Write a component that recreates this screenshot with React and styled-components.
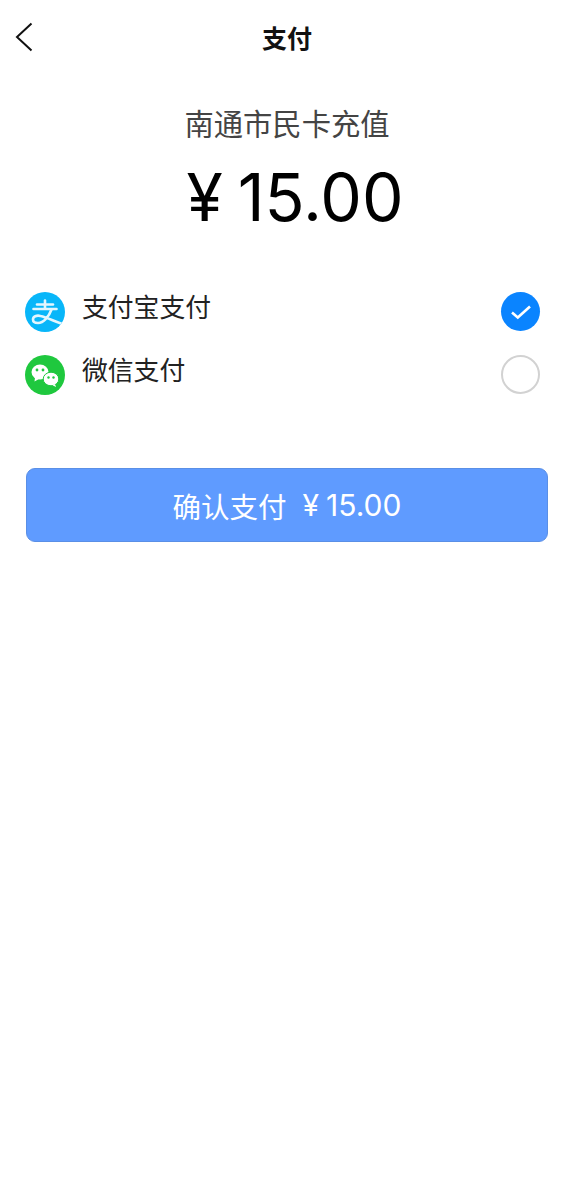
import React, { useState } from 'react'
import styled, { createGlobalStyle } from 'styled-components'

const GlobalStyle = createGlobalStyle`
  html, body {
    margin: 0;
    padding: 0;
    background: #fff;
    font-family: "Inter", "Noto Sans CJK SC", sans-serif;
  }
`
const Page = styled.div`
  width: 577px;
  height: 1195px;
  background: #fff;
  overflow: hidden;
`
const Header = styled.div`
  height: 78px;
  display: flex;
  align-items: center;
  position: relative;
`
const Back = styled.button`
  position: absolute;
  left: 15px;
  top: 22px;
  width: 18px;
  height: 30px;
  padding: 0;
  border: none;
  background: transparent;
  color: #111;
`
const Title = styled.div`
  width: 100%;
  padding-right: 3px;
  text-align: center;
  font-size: 25px;
  line-height: 78px;
  font-weight: 700;
  color: #111;
`
const Merchant = styled.div`
  margin-top: 25px;
  padding-right: 3px;
  text-align: center;
  font-size: 29.3px;
  line-height: 44px;
  color: #444;
`
const Amount = styled.div`
  margin-top: 13px;
  padding-left: 13px;
  display: flex;
  justify-content: center;
  align-items: center;
  gap: 15px;
  height: 74px;
  font-size: 66px;
  line-height: 74px;
  color: #000;
`
const Methods = styled.div`
  margin-top: 58px;
  padding: 0 37px 0 25px;
  display: flex;
  flex-direction: column;
  gap: 23px;
`
const Method = styled.div`
  display: flex;
  align-items: center;
  height: 40px;
  cursor: pointer;
`
const Label = styled.div`
  margin-left: 17px;
  flex: 1;
  font-size: 25.8px;
  line-height: 34px;
  color: #222;
  transform: translateY(-4px);
`
const Radio = styled.div`
  align-self: flex-start;
  width: 39px;
  height: 39px;
  box-sizing: border-box;
  border-radius: 50%;
  display: flex;
  align-items: center;
  justify-content: center;
  background: ${({ $on }) => ($on ? '#0a84ff' : '#fff')};
  border: ${({ $on }) => ($on ? 'none' : '2px solid #d2d2d2')};
`
const PayButton = styled.button`
  display: flex;
  align-items: center;
  justify-content: center;
  width: 522px;
  height: 74px;
  margin: 73px 0 0 26px;
  padding: 0;
  box-sizing: border-box;
  border: 1px solid #5a8fe6;
  border-radius: 9px;
  background: #5f9bff;
  color: #fff;
  font-family: inherit;
  font-size: 28.5px;
`
const PayPrice = styled.span`
  display: flex;
  gap: 7px;
  margin-left: 16px;
  font-size: 30px;
`

const BackIcon = () => (
  <svg width="18" height="30" viewBox="0 0 18 30" fill="none">
    <path d="M16.5 1.5 2 15l14.5 13.5" stroke="currentColor" strokeWidth="2" />
  </svg>
)

const AlipayIcon = () => (
  <svg width="40" height="40" viewBox="0 0 40 40">
    <defs>
      <clipPath id="alipay-disc"><circle cx="20" cy="20" r="20" /></clipPath>
    </defs>
    <circle cx="20" cy="20" r="20" fill="#08b6f9" />
    <g fill="none" stroke="#e3f6fe" strokeWidth="2.6" strokeLinecap="round" clipPath="url(#alipay-disc)">
      <path d="M12 12.500h16" />
      <path d="M20 8.500v8" />
      <path d="M8.500 17h23" />
      <path d="M26.500 17.500c-2.500 7-8 13.500-13.500 13.500-3.500 0-5-1.800-5-3.500 0-3 3.500-4.500 7.500-3.500 7 1.500 15 6 25 9" />
    </g>
  </svg>
)

const WechatIcon = () => (
  <svg width="40" height="40" viewBox="0 0 40 40">
    <circle cx="20" cy="20" r="20" fill="#1fc83e" />
    <ellipse cx="15" cy="17" rx="8.500" ry="7.500" fill="#fff" />
    <path d="M10 22.500 9.500 26.500l4.500-2.500z" fill="#fff" />
    <ellipse cx="26" cy="24" rx="7.800" ry="6.800" fill="#fff" stroke="#1fc83e" strokeWidth="1" />
    <path d="M30 29l1 3-3.500-1.800z" fill="#fff" />
    <circle cx="12" cy="15" r="1.400" fill="#1fc83e" />
    <circle cx="18" cy="15" r="1.400" fill="#1fc83e" />
    <circle cx="23.500" cy="22.500" r="1.200" fill="#1fc83e" />
    <circle cx="28.500" cy="22.500" r="1.200" fill="#1fc83e" />
  </svg>
)

const CheckIcon = () => (
  <svg width="22" height="16" viewBox="0 0 22 16" fill="none">
    <path d="M2 8.500 7.800 13.500 20 2.500" stroke="#fff" strokeWidth="2.600" />
  </svg>
)

const methods = [
  { id: 'alipay', name: '支付宝支付', Icon: AlipayIcon },
  { id: 'wechat', name: '微信支付', Icon: WechatIcon },
]

const App = () => {
  const [selected, setSelected] = useState('alipay')
  return (
    <Page>
      <GlobalStyle />
      <Header>
        <Back><BackIcon /></Back>
        <Title>支付</Title>
      </Header>
      <Merchant>南通市民卡充值</Merchant>
      <Amount><span>¥</span><span>15.00</span></Amount>
      <Methods>
        {methods.map(({ id, name, Icon }) => (
          <Method key={id} onClick={() => setSelected(id)}>
            <Icon />
            <Label>{name}</Label>
            <Radio $on={selected === id}>{selected === id && <CheckIcon />}</Radio>
          </Method>
        ))}
      </Methods>
      <PayButton>确认支付<PayPrice><span>¥</span><span>15.00</span></PayPrice></PayButton>
    </Page>
  )
}

export default App
